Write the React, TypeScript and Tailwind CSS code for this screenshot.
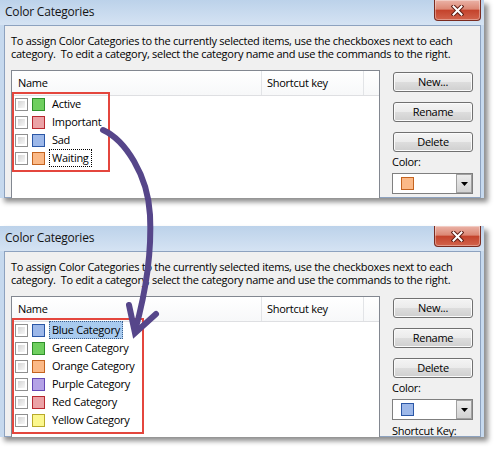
import React from "react";

type Row = { name: string; swatch: string; focus?: boolean; selected?: boolean };

const firstRows: Row[] = [
  { name: "Active", swatch: "bg-[#6fcf5f] border-[#2f8f2a]" },
  { name: "Important", swatch: "bg-[#eba2a6] border-[#b8282f]" },
  { name: "Sad", swatch: "bg-[#9db8e9] border-[#2b57a6]" },
  { name: "Waiting", swatch: "bg-[#fbb987] border-[#c4631f]", focus: true },
];

const secondRows: Row[] = [
  { name: "Blue Category", swatch: "bg-[#9db8e9] border-[#2b57a6]", selected: true },
  { name: "Green Category", swatch: "bg-[#6fcf5f] border-[#2f8f2a]" },
  { name: "Orange Category", swatch: "bg-[#fbb987] border-[#c4631f]" },
  { name: "Purple Category", swatch: "bg-[#b4a2e6] border-[#6447b4]" },
  { name: "Red Category", swatch: "bg-[#eba2a6] border-[#b8282f]" },
  { name: "Yellow Category", swatch: "bg-[#fbf78e] border-[#b8a92a]" },
];

function CloseButton() {
  return (
    <div className="mr-[3px] flex h-[21px] w-[47px] items-center justify-center rounded-b-[4px] border border-t-0 border-[#7a2b20] bg-[linear-gradient(to_bottom,#ebb3a7_0%,#dc8875_45%,#c4432c_52%,#d2644d_100%)] shadow-[inset_0_0_0_1px_rgba(255,255,255,0.35)]">
      <svg width="13" height="11" viewBox="0 0 13 11">
        <path d="M2.5 1.5 L10.5 9.5 M10.5 1.5 L2.5 9.5" stroke="#5e1d14" strokeWidth="4" strokeLinecap="square" />
        <path d="M2.5 1.5 L10.5 9.5 M10.5 1.5 L2.5 9.5" stroke="#ffffff" strokeWidth="2" strokeLinecap="square" />
      </svg>
    </div>
  );
}

function Checkbox() {
  return (
    <div className="h-[13px] w-[13px] shrink-0 border border-[#8f8f8f] bg-white p-[2px]">
      <div className="h-full w-full bg-[linear-gradient(135deg,#d4d4d4,#f7f7f7)]" />
    </div>
  );
}

function Button({ label }: { label: string }) {
  return (
    <div className="flex h-[20px] w-[80px] items-center justify-center rounded-[3px] border border-[#707070] bg-[linear-gradient(to_bottom,#f4f4f4_0%,#ebebeb_50%,#dddddd_51%,#cfcfcf_100%)] text-[11px] text-black shadow-[inset_0_0_0_1px_#fbfbfb]">
      {label}
    </div>
  );
}

function Window({ height, rows, comboSwatch, shortcut }: { height: string; rows: Row[]; comboSwatch: string; shortcut?: boolean }) {
  return (
    <div className={`${height} flex w-[484px] flex-col overflow-hidden bg-[#c6d9ee] shadow-[4px_4px_5px_rgba(0,0,0,0.45)]`}>
      <div className="flex h-[25px] shrink-0 items-start justify-between bg-[linear-gradient(to_bottom,#bcd2ea,#d5e3f3)]">
        <span className="pl-[5px] pt-[4px] text-[12px] leading-[16px] tracking-[-0.2px] text-[#141414]">Color Categories</span>
        <CloseButton />
      </div>
      <div className="ml-[4px] mr-[3px] min-h-0 flex-1 border border-[#8da2bf] bg-[#f0f0f0] pl-[6px] pr-[7px] pt-[8px] tracking-[-0.27px]">
        <p className="whitespace-pre text-[11px] leading-[13px] text-black">
          {"To assign Color Categories to the currently selected items, use the checkboxes next to each\ncategory.  To edit a category, select the category name and use the commands to the right."}
        </p>
        <div className="mt-[10px] flex items-start gap-[12px]">
          <div className="h-[300px] w-[369px] border border-[#828790] bg-white">
            <div className="flex h-[25px] border-b border-[#dedfe2] bg-[linear-gradient(to_bottom,#ffffff,#f7f8f9)] text-[11px] text-black">
              <div className="flex w-[250px] items-center border-r border-[#e2e4e7] pl-[6px]">Name</div>
              <div className="flex w-[102px] items-center border-r border-[#e2e4e7] pl-[5px]">Shortcut key</div>
            </div>
            <div className="-mt-[4px] w-fit border-2 border-[#e4463d] pb-[3px] pl-[1px] pr-[4px] pt-[1px]">
              {rows.map((r) => (
                <div key={r.name} className="flex h-[18px] items-center">
                  <Checkbox />
                  <div className={`ml-[4px] h-[13px] w-[13px] shrink-0 border ${r.swatch}`} />
                  <span
                    className={`ml-[4px] flex h-[18px] items-center whitespace-nowrap px-[2px] text-[11px] text-black ${
                      r.focus ? "border border-dotted border-black" : r.selected ? "border border-dotted border-[#3b5f8c] bg-[#a9cbef]" : "border border-transparent"
                    }`}
                  >
                    {r.name}
                  </span>
                </div>
              ))}
            </div>
          </div>
          <div className="flex w-[81px] flex-col pt-[2px] text-[11px] text-black">
            <div className="flex flex-col gap-[10px] pl-[1px]">
              <Button label="New..." />
              <Button label="Rename" />
              <Button label="Delete" />
            </div>
            <div className="mt-[3px] leading-[14px]">Color:</div>
            <div className="mt-[4px] flex h-[21px] w-[81px] border border-[#7f7f7f] bg-white">
              <div className="flex flex-1 items-center pl-[8px]">
                <div className={`h-[13px] w-[13px] border ${comboSwatch}`} />
              </div>
              <div className="flex w-[16px] items-center justify-center border border-[#a0a0a0] bg-[linear-gradient(to_bottom,#ececec,#d2d2d2)]">
                <svg width="7" height="4" viewBox="0 0 7 4">
                  <polygon points="0,0 7,0 3.5,4" fill="#000" />
                </svg>
              </div>
            </div>
            {shortcut && <div className="mt-[4px] leading-[14px]">Shortcut Key:</div>}
          </div>
        </div>
      </div>
    </div>
  );
}

export default function App() {
  return (
    <div className="relative h-[449px] w-[500px] overflow-hidden bg-white font-['Open_Sans',sans-serif]">
      <div className="flex flex-col gap-[28px]">
        <Window height="h-[198px]" rows={firstRows} comboSwatch="bg-[#fbb987] border-[#c4631f]" />
        <Window height="h-[211px]" rows={secondRows} comboSwatch="bg-[#9db8e9] border-[#2b57a6]" shortcut />
      </div>
      <svg className="pointer-events-none absolute inset-0" width="500" height="449" viewBox="0 0 500 449">
        <path
          d="M103 130 C125 140 148 175 150 215 S145 295 135 331"
          fill="none"
          stroke="#56468a"
          strokeWidth="6"
          strokeLinecap="round"
        />
        <path d="M129 305 L135 333 L156 314" fill="none" stroke="#56468a" strokeWidth="6" strokeLinecap="round" strokeLinejoin="miter" />
      </svg>
    </div>
  );
}
